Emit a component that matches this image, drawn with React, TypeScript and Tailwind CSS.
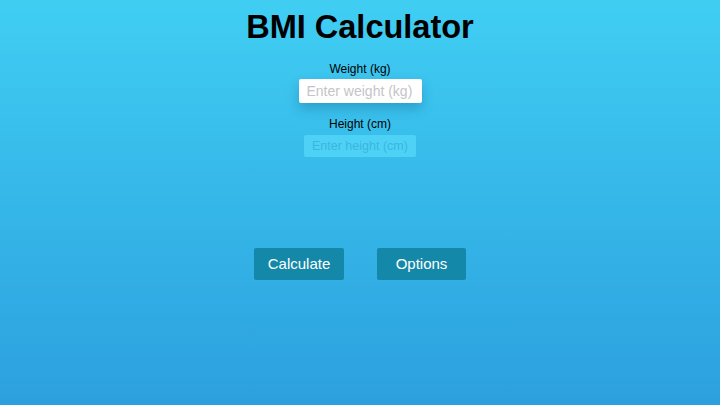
import React from "react";

export default function App() {
  return (
    <div
      className="w-[720px] h-[405px] flex flex-col items-center bg-gradient-to-b from-[#40cef3] to-[#2ca0de]"
      style={{ fontFamily: '"Liberation Sans", Arial, sans-serif' }}
    >
      <h1 className="mt-[8px] text-[32.5px] leading-[38px] font-bold text-black">BMI Calculator</h1>
      <label className="mt-[16px] text-[12px] leading-[14px] text-black">Weight (kg)</label>
      <input
        placeholder="Enter weight (kg)"
        className="mt-[3px] w-[123px] h-[24px] rounded-[2px] bg-white px-[8px] text-[14px] text-black placeholder:text-[#c4c4c8] outline-none shadow-[0_6px_12px_rgba(0,60,100,0.25)]"
      />
      <label className="mt-[14px] text-[12px] leading-[14px] text-black">Height (cm)</label>
      <input
        placeholder="Enter height (cm)"
        className="mt-[4px] w-[112px] h-[22px] rounded-[2px] bg-[#4dd2f6] px-[8px] text-[12.5px] text-black placeholder:text-[#3cb5e0] outline-none"
      />
      <div className="mt-[91px] flex gap-[33px]">
        <button className="w-[90px] h-[32px] rounded-[2px] bg-[#1488a8] text-white text-[15px]">Calculate</button>
        <button className="w-[89px] h-[32px] rounded-[2px] bg-[#1488a8] text-white text-[15px]">Options</button>
      </div>
    </div>
  );
}
